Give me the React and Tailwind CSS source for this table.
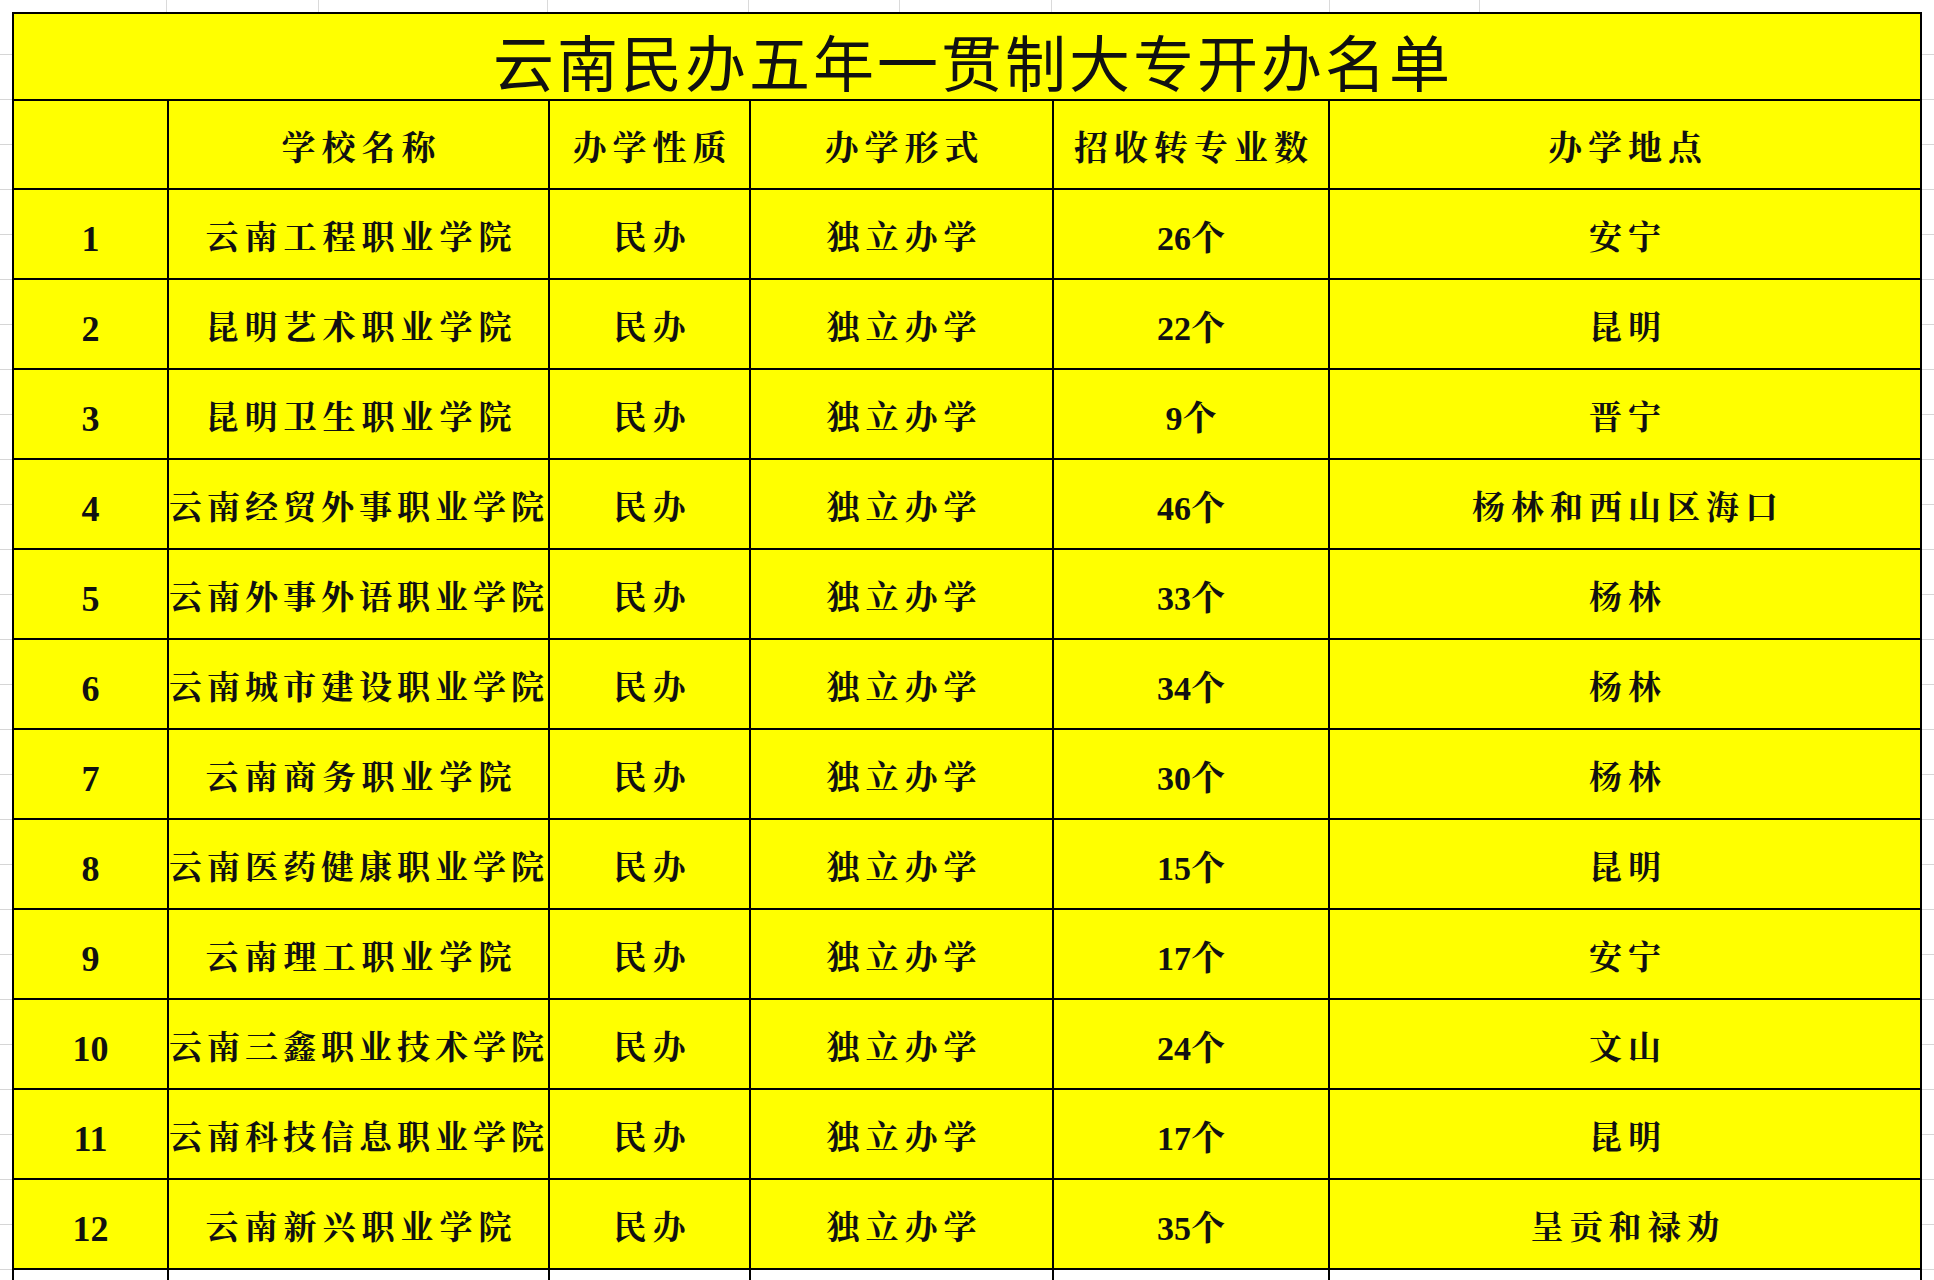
import React from "react";

const rows = [
  ["1", "云南工程职业学院", "民办", "独立办学", "26个", "安宁"],
  ["2", "昆明艺术职业学院", "民办", "独立办学", "22个", "昆明"],
  ["3", "昆明卫生职业学院", "民办", "独立办学", "9个", "晋宁"],
  ["4", "云南经贸外事职业学院", "民办", "独立办学", "46个", "杨林和西山区海口"],
  ["5", "云南外事外语职业学院", "民办", "独立办学", "33个", "杨林"],
  ["6", "云南城市建设职业学院", "民办", "独立办学", "34个", "杨林"],
  ["7", "云南商务职业学院", "民办", "独立办学", "30个", "杨林"],
  ["8", "云南医药健康职业学院", "民办", "独立办学", "15个", "昆明"],
  ["9", "云南理工职业学院", "民办", "独立办学", "17个", "安宁"],
  ["10", "云南三鑫职业技术学院", "民办", "独立办学", "24个", "文山"],
  ["11", "云南科技信息职业学院", "民办", "独立办学", "17个", "昆明"],
  ["12", "云南新兴职业学院", "民办", "独立办学", "35个", "呈贡和禄劝"],
];

const widths = ["w-[155px]", "w-[381px]", "w-[201px]", "w-[303px]", "w-[276px]", "w-[590px]"];
const header = ["", "学校名称", "办学性质", "办学形式", "招收转专业数", "办学地点"];

const topCells = ["w-[167px]", "w-[152px]", "w-[229px]", "w-[201px]", "w-[151px]", "w-[152px]", "w-[278px]", "w-[150px]"];

const font = "font-['Liberation_Serif','Noto_Serif_CJK_SC','Noto_Sans_CJK_SC',serif]";

function Cell({ i, children, overflow, numeric }) {
  const last = i === 5;
  return (
    <div
      className={`${widths[i]} shrink-0 h-full flex items-center overflow-hidden whitespace-nowrap pt-[9px] ${
        overflow ? "justify-start" : numeric ? "justify-center" : "justify-center pl-[6px]"
      } ${last ? "" : "border-r-2 border-black"}`}
    >
      {children}
    </div>
  );
}

export default function App() {
  return (
    <div className={`w-[1934px] h-[1280px] bg-white overflow-hidden flex flex-col ${font}`}>
      <div className="h-[12px] shrink-0 flex">
        {topCells.map((w, k) => (
          <div key={k} className={`${w} shrink-0 h-full border-r border-[#dadada]`} />
        ))}
        <div className="flex-1" />
      </div>
      <div className="flex flex-1 min-h-0">
        <div className="w-[12px] shrink-0 flex flex-col">
          {Array.from({ length: 30 }).map((_, k) => (
            <div key={k} className={`${k === 0 ? "h-[43px]" : "h-[45px]"} shrink-0 border-b border-[#d6d6d6]`} />
          ))}
        </div>
        <div className="w-[1910px] shrink-0 border-x-2 border-t-2 border-black bg-[#ffff00] flex flex-col">
          <div className="h-[87px] shrink-0 border-b-2 border-black flex items-center justify-center pt-[8px] pl-[12px]">
            <span className="font-['Noto_Sans_CJK_SC',sans-serif] font-normal text-[61px] leading-none tracking-[3px] text-[#111]">
              云南民办五年一贯制大专开办名单
            </span>
          </div>
          <div className="h-[89px] shrink-0 border-b-2 border-black flex">
            {header.map((h, i) => (
              <Cell key={i} i={i}>
                <span className="text-[34px] font-bold leading-none tracking-[6px] text-[#111]">{h}</span>
              </Cell>
            ))}
          </div>
          {rows.map((r, ri) => (
            <div key={ri} className="h-[90px] shrink-0 border-b-2 border-black flex">
              {r.map((c, i) => {
                const overflow = i === 1 && c.length > 8;
                const numeric = i === 0 || i === 4;
                return (
                  <Cell key={i} i={i} overflow={overflow} numeric={numeric}>
                    <span
                      className={`font-bold leading-none text-[#111] ${
                        i === 0
                          ? "text-[36px]"
                          : i === 4
                          ? "text-[34px]"
                          : overflow
                          ? "text-[33px] tracking-[5px]"
                          : "text-[33px] tracking-[6px]"
                      }`}
                    >
                      {c}
                    </span>
                  </Cell>
                );
              })}
            </div>
          ))}
          <div className="h-[90px] shrink-0 flex bg-white">
            {widths.map((w, i) => (
              <Cell key={i} i={i} />
            ))}
          </div>
        </div>
        <div className="flex-1 flex flex-col">
          {Array.from({ length: 30 }).map((_, k) => (
            <div key={k} className={`${k === 0 ? "h-[43px]" : "h-[45px]"} shrink-0 border-b border-[#d6d6d6]`} />
          ))}
        </div>
      </div>
    </div>
  );
}
